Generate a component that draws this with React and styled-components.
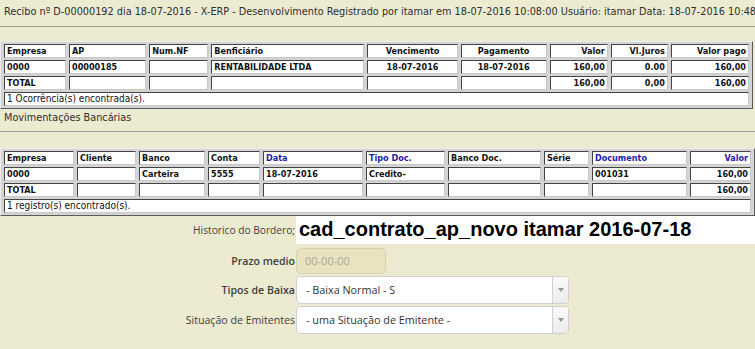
import React from "react";
import styled, { createGlobalStyle } from "styled-components";

const Global = createGlobalStyle`
  * { box-sizing: border-box; }
  html, body { margin: 0; padding: 0; background: #ecebd2; }
  body { width: 755px; height: 349px; overflow: hidden; font-family: "DejaVu Sans Condensed", "DejaVu Sans", sans-serif; }
`;

const Page = styled.div`
  display: flex;
  flex-direction: column;
  width: 755px;
`;

const TitleBar = styled.div`
  height: 27px;
  padding: 5px 0 0 4px;
  border-bottom: 1px solid #9a9a90;
  font-size: 10.8px;
  color: #2e2e2e;
  white-space: nowrap;
  overflow: hidden;
`;

const SectionTitle = styled.div`
  height: 23px;
  padding: 2px 0 0 4px;
  border-bottom: 1px solid #9a9a90;
  font-size: 10.8px;
  color: #2e2e2e;
  white-space: nowrap;
`;

const Band = styled.div`
  height: ${(p) => p.$h}px;
`;

const Grid = styled.table`
  width: 753px;
  table-layout: fixed;
  border-collapse: separate;
  border-spacing: 3px 2px;
  background: #d4d4d4;
  border-style: solid;
  border-width: 1px;
  border-color: #eeeeee #5a5a5a #5a5a5a #eeeeee;
`;

const Cell = styled.td`
  height: 14px;
  padding: 0 2px;
  background: #fff;
  border-style: solid;
  border-width: 1px;
  border-color: #444 #c8c8c8 #c8c8c8 #444;
  font-size: ${(p) => (p.$regular ? 10 : 9)}px;
  font-weight: ${(p) => (p.$regular ? "normal" : "bold")};
  color: ${(p) => (p.$blue ? "#1c1ca8" : "#111")};
  text-align: ${(p) => p.$align || "left"};
  white-space: nowrap;
  overflow: hidden;
  line-height: 12px;
`;

const Form = styled.div`
  display: flex;
  flex-direction: column;
  gap: 2px;
  font-family: "Open Sans", sans-serif;
`;

const FieldRow = styled.div`
  display: grid;
  grid-template-columns: 296px 1fr;
  align-items: center;
  margin-top: ${(p) => p.$mt || 0}px;
`;

const Label = styled.label`
  text-align: right;
  padding-right: 1px;
  font-size: ${(p) => p.$size || 10.6}px;
  color: #3e3e3e;
  font-weight: ${(p) => p.$weight || 400};
  white-space: nowrap;
`;

const HistBox = styled.div`
  height: 28px;
  background: #fff;
  padding: 0 0 0 3px;
  font-family: "Liberation Sans", Arial, sans-serif;
  font-weight: bold;
  font-size: 20px;
  color: #000;
  line-height: 27px;
  white-space: nowrap;
`;

const DateInput = styled.div`
  width: 90px;
  height: 26px;
  border: 1px solid #d6d0ac;
  border-radius: 5px;
  background: #e9e3c0;
  color: #a9a594;
  font-size: 11px;
  padding-left: 8px;
  line-height: 24px;
`;

const Select = styled.div`
  width: 273px;
  height: 28px;
  display: flex;
  background: #fff;
  border: 1px solid #cfcfcf;
  border-radius: 4px;
  overflow: hidden;
`;

const SelectText = styled.div`
  flex: 1;
  padding-left: 9px;
  font-size: 10.8px;
  color: #333;
  line-height: 26px;
  white-space: nowrap;
`;

const Arrow = styled.div`
  width: 16px;
  display: flex;
  align-items: center;
  justify-content: center;
  background: linear-gradient(#fafafa, #ececec);
  border-left: 1px solid #d0d0d0;
  &::after {
    content: "";
    border-left: 3.5px solid transparent;
    border-right: 3.5px solid transparent;
    border-top: 4px solid #999;
  }
`;

const t1Cols = [
  { h: "Empresa", w: 62 },
  { h: "AP", w: 77 },
  { h: "Num.NF", w: 59 },
  { h: "Benficiário", w: 153 },
  { h: "Vencimento", w: 90, a: "center" },
  { h: "Pagamento", w: 86, a: "center" },
  { h: "Valor", w: 58, a: "right" },
  { h: "Vl.Juros", w: 57, a: "right" },
  { h: "Valor pago", w: 78, a: "right" },
];
const t1Rows = [
  ["0000", "00000185", "", "RENTABILIDADE LTDA", "18-07-2016", "18-07-2016", "160,00", "0.00", "160,00"],
  ["TOTAL", "", "", "", "", "", "160,00", "0,00", "160,00"],
];

const t2Cols = [
  { h: "Empresa", w: 70 },
  { h: "Cliente", w: 59 },
  { h: "Banco", w: 66 },
  { h: "Conta", w: 52 },
  { h: "Data", w: 100, b: true },
  { h: "Tipo Doc.", w: 79, b: true },
  { h: "Banco Doc.", w: 93 },
  { h: "Série", w: 45 },
  { h: "Documento", w: 95, b: true },
  { h: "Valor", w: 61, b: true, a: "right" },
];
const t2Rows = [
  ["0000", "", "Carteira", "5555", "18-07-2016", "Credito-", "", "", "001031", "160,00"],
  ["TOTAL", "", "", "", "", "", "", "", "", "160,00"],
];

function DataTable({ cols, rows, footer }) {
  return (
    <Grid>
      <tbody>
        <tr>
          {cols.map((c) => (
            <Cell key={c.h} style={{ width: c.w }} $align={c.a} $blue={c.b}>
              {c.h}
            </Cell>
          ))}
        </tr>
        {rows.map((r, i) => (
          <tr key={i}>
            {r.map((v, j) => (
              <Cell key={j} $align={cols[j].a}>
                {v}
              </Cell>
            ))}
          </tr>
        ))}
        <tr>
          <Cell colSpan={cols.length} $regular>
            {footer}
          </Cell>
        </tr>
      </tbody>
    </Grid>
  );
}

export default function App() {
  return (
    <Page>
      <Global />
      <TitleBar>
        Recibo nº D-00000192 dia 18-07-2016 - X-ERP - Desenvolvimento Registrado por itamar em 18-07-2016 10:08:00 Usuário: itamar Data: 18-07-2016 10:48:12
      </TitleBar>
      <Band $h={14} />
      <DataTable cols={t1Cols} rows={t1Rows} footer="1 Ocorrência(s) encontrada(s)." />
      <SectionTitle>Movimentações Bancárias</SectionTitle>
      <Band $h={16} />
      <DataTable cols={t2Cols} rows={t2Rows} footer="1 registro(s) encontrado(s)." />
      <Form>
        <FieldRow>
          <Label $size={10.2}>Historico do Bordero;</Label>
          <HistBox>cad_contrato_ap_novo itamar 2016-07-18</HistBox>
        </FieldRow>
        <FieldRow $mt={2}>
          <Label $weight={600}>Prazo medio</Label>
          <DateInput>00-00-00</DateInput>
        </FieldRow>
        <FieldRow>
          <Label $weight={600}>Tipos de Baixa</Label>
          <Select>
            <SelectText>- Baixa Normal - S</SelectText>
            <Arrow />
          </Select>
        </FieldRow>
        <FieldRow>
          <Label>Situação de Emitentes</Label>
          <Select>
            <SelectText>- uma Situação de Emitente -</SelectText>
            <Arrow />
          </Select>
        </FieldRow>
      </Form>
    </Page>
  );
}
